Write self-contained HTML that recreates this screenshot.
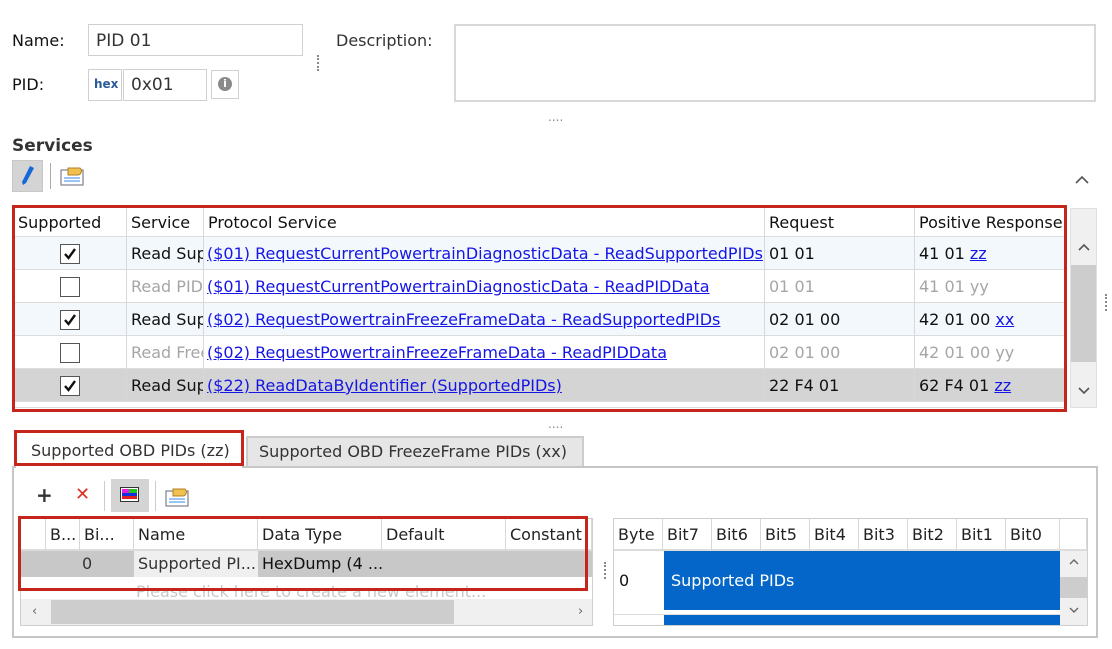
<!DOCTYPE html>
<html><head><meta charset="utf-8"><style>
*{box-sizing:border-box;margin:0;padding:0}
body{width:1112px;height:649px;background:#fff;position:relative;overflow:hidden;font-family:"DejaVu Sans","Liberation Sans",sans-serif;font-size:16px;color:#111}
.a{position:absolute}
.t{position:absolute;white-space:nowrap;line-height:20px}
.box{position:absolute;border:1px solid #d0d0d0;background:#fff}
.cell{position:absolute;white-space:nowrap;overflow:hidden;line-height:33px;padding-left:4px;border-right:1px solid #d8d8d8;border-bottom:1px solid #dcdcdc;font-size:16px}
.lk{color:#1515e6;text-decoration:underline}
.g{color:#a6a6a6}
.cb{position:absolute;left:60px;width:20px;height:20px;border:1.5px solid #555;background:#fff}
.cb svg{position:absolute;left:1px;top:1px}
.red{position:absolute;border:3px solid #c4261b}
</style></head><body>
<div class="t" style="left:12px;top:31px">Name:</div>
<div class="box" style="left:88px;top:24px;width:215px;height:32px"></div>
<div class="t" style="left:96px;top:31px;font-size:17px;color:#333">PID 01</div>
<div class="a" style="left:317px;top:55px;width:2px;height:16px;border-left:2px dotted #888"></div>
<div class="t" style="left:336px;top:31px;color:#333">Description:</div>
<div class="box" style="left:454px;top:24px;width:642px;height:78px;border:2px solid #d8d8d8"></div>
<div class="t" style="left:12px;top:75px">PID:</div>
<div class="box" style="left:88px;top:69px;width:34px;height:32px"></div>
<div class="t" style="left:94px;top:74px;font-size:12px;font-weight:bold;color:#2a5a9a">hex</div>
<div class="box" style="left:123px;top:69px;width:84px;height:32px"></div>
<div class="t" style="left:131px;top:75px;font-size:17px;color:#333">0x01</div>
<div class="box" style="left:211px;top:70px;width:28px;height:29px"></div>
<div class="a" style="left:218px;top:77px;width:14px;height:14px;border-radius:50%;background:#8a8a8a;color:#fff;font-size:11px;font-weight:bold;text-align:center;line-height:14px">i</div>
<div class="t" style="left:548px;top:107px;color:#888;font-size:12px">....</div>
<div class="t" style="left:12px;top:136px;font-weight:bold;font-size:17px;color:#333">Services</div>
<div class="a" style="left:12px;top:160px;width:31px;height:32px;background:#d4d4d4;border:1px solid #c8c8c8"></div>
<svg class="a" style="left:18px;top:164px" width="18" height="24"><path d="M12 2 L16 4 L8 19 L5 21 L4 18 Z" fill="#1668d8"/></svg>
<div class="a" style="left:50px;top:163px;width:1px;height:26px;background:#aaa"></div>
<svg class="a" style="left:60px;top:164px" width="26" height="22"><rect x="1" y="6" width="22" height="15" fill="#fff" stroke="#667"/><line x1="4" y1="14" x2="20" y2="14" stroke="#3a8ae0"/><line x1="4" y1="17" x2="20" y2="17" stroke="#3a8ae0"/><path d="M8 4 h12 a4 4 0 0 1 -2 7 h-10 z" fill="#f0c050" stroke="#b08020"/></svg>
<svg class="a" style="left:1075px;top:175px" width="14" height="10"><path d="M1 8 L7 2 L13 8" fill="none" stroke="#555" stroke-width="1.6"/></svg>

<div class="a" style="left:14px;top:208px;width:1052px;height:200px;background:#fff;overflow:hidden">
<div class="a" style="left:0;top:0;width:1052px;height:29px;border-bottom:2px solid #dedede"></div>
</div>
<div class="a" style="left:1070px;top:208px;width:27px;height:200px;background:#f0f0f0;border:1px solid #e0e0e0"></div>
<div class="a" style="left:1071px;top:265px;width:25px;height:97px;background:#cdcdcd"></div>
<svg class="a" style="left:1077px;top:242px" width="14" height="10"><path d="M2 8 L7 3 L12 8" fill="none" stroke="#555" stroke-width="1.6"/></svg>
<svg class="a" style="left:1077px;top:386px" width="14" height="10"><path d="M2 2 L7 7 L12 2" fill="none" stroke="#555" stroke-width="1.6"/></svg>
<div class="a" style="left:1105px;top:294px;width:2px;height:17px;border-left:2px dotted #888"></div>
<div class="t" style="left:548px;top:414px;color:#888;font-size:12px">....</div>

<div class="a" style="left:246px;top:436px;width:338px;height:31px;background:#e6e6e6;border:2px solid #ccc;border-bottom:none"></div>
<div class="t" style="left:259px;top:442px;color:#333">Supported OBD FreezeFrame PIDs (xx)</div>
<div class="a" style="left:12px;top:466px;width:1086px;height:172px;border:2px solid #c6c6c6;background:#fff"></div>
<div class="a" style="left:16px;top:432px;width:226px;height:36px;background:#fff"></div>
<div class="red" style="left:14px;top:430px;width:230px;height:36px"></div>
<div class="t" style="left:31px;top:441px;color:#333">Supported OBD PIDs (zz)</div>

<div class="t" style="left:36px;top:485px;font-size:20px;font-weight:bold;color:#333">+</div>
<div class="t" style="left:75px;top:485px;font-size:18px;font-weight:bold;color:#e03020">✕</div>
<div class="a" style="left:104px;top:481px;width:1px;height:30px;background:#ccc"></div>
<div class="a" style="left:111px;top:479px;width:38px;height:33px;background:#d4d4d4"></div>
<svg class="a" style="left:120px;top:487px" width="20" height="16"><rect x="0.5" y="0.5" width="18" height="14" fill="#fff" stroke="#333"/><rect x="2" y="2" width="7" height="4" fill="#e020e0"/><rect x="9" y="2" width="8" height="4" fill="#20c020"/><rect x="2" y="6" width="15" height="3" fill="#1030e0"/><rect x="2" y="9" width="15" height="3" fill="#e02020"/></svg>
<div class="a" style="left:155px;top:481px;width:1px;height:30px;background:#ccc"></div>
<svg class="a" style="left:165px;top:485px" width="26" height="22"><rect x="1" y="6" width="22" height="15" fill="#fff" stroke="#667"/><line x1="4" y1="14" x2="20" y2="14" stroke="#3a8ae0"/><line x1="4" y1="17" x2="20" y2="17" stroke="#3a8ae0"/><path d="M8 4 h12 a4 4 0 0 1 -2 7 h-10 z" fill="#f0c050" stroke="#b08020"/></svg>

<div class="a" style="left:20px;top:518px;width:573px;height:108px;border:1px solid #cfcfcf;background:#fff"></div>
<div class="t" style="left:136px;top:582px;color:#c8c8c8">Please click here to create a new element...</div>
<div class="a" style="left:21px;top:599px;width:571px;height:26px;background:#f0f0f0"></div>
<div class="a" style="left:51px;top:600px;width:403px;height:24px;background:#cdcdcd"></div>
<div class="t" style="left:32px;top:602px;color:#666;font-size:13px">‹</div>
<div class="t" style="left:578px;top:602px;color:#666;font-size:13px">›</div>
<div class="a" style="left:604px;top:562px;width:2px;height:17px;border-left:2px dotted #888"></div>

<div class="a" style="left:613px;top:518px;width:475px;height:108px;border:1px solid #cfcfcf;background:#fff"></div>
<div class="a" style="left:664px;top:551px;width:396px;height:59px;background:#0366c8"></div>
<div class="t" style="left:671px;top:571px;color:#fff">Supported PIDs</div>
<div class="t" style="left:619px;top:571px">0</div>
<div class="a" style="left:614px;top:610px;width:446px;height:5px;border-bottom:1px solid #ddd"></div>
<div class="a" style="left:664px;top:615px;width:396px;height:10px;background:#0366c8"></div>
<div class="a" style="left:1060px;top:551px;width:27px;height:74px;background:#f0f0f0"></div>
<div class="a" style="left:1060px;top:577px;width:27px;height:21px;background:#cdcdcd"></div>
<svg class="a" style="left:1068px;top:558px" width="12" height="8"><path d="M2 6 L6 2 L10 6" fill="none" stroke="#666" stroke-width="1.4"/></svg>
<svg class="a" style="left:1068px;top:606px" width="12" height="8"><path d="M2 2 L6 6 L10 2" fill="none" stroke="#666" stroke-width="1.4"/></svg>

<script>
function C(p,l,t,w,h,txt,st){var d=document.createElement('div');d.className='cell';d.style.cssText='left:'+l+'px;top:'+t+'px;width:'+w+'px;height:'+h+'px;line-height:'+h+'px;'+(st||'');d.innerHTML=txt;document.body.appendChild(d);}
function R(l,t,w,h){var d=document.createElement('div');d.className='red';d.style.cssText='left:'+l+'px;top:'+t+'px;width:'+w+'px;height:'+h+'px';document.body.appendChild(d);}
var cols=[14,127,204,765,915,1066];
var hd=['Supported','Service','Protocol Service','Request','Positive Response'];
for(var i=0;i<5;i++)C(0,cols[i],208,cols[i+1]-cols[i],30,hd[i],'border-bottom:2px solid #dcdcdc;background:#fff;');
var rows=[
['1','Read Supported','<span class="lk">($01) RequestCurrentPowertrainDiagnosticData - ReadSupportedPIDs</span>','01 01','41 01 <span class="lk">zz</span>','#f2f8fc',0],
['0','Read PIDData','<span class="lk">($01) RequestCurrentPowertrainDiagnosticData - ReadPIDData</span>','01 01','41 01 yy','#fff',1],
['1','Read Supported','<span class="lk">($02) RequestPowertrainFreezeFrameData - ReadSupportedPIDs</span>','02 01 00','42 01 00 <span class="lk">xx</span>','#f2f8fc',0],
['0','Read FreezeFrame','<span class="lk">($02) RequestPowertrainFreezeFrameData - ReadPIDData</span>','02 01 00','42 01 00 yy','#fff',1],
['1','Read Supported','<span class="lk">($22) ReadDataByIdentifier (SupportedPIDs)</span>','22 F4 01','62 F4 01 <span class="lk">zz</span>','#d4d4d4',0]];
for(var r=0;r<5;r++){var y=237+r*33,Rw=rows[r];
for(var i=0;i<5;i++){var txt=i==0?'':Rw[i];var st='background:'+Rw[5]+';';if(Rw[6]&&(i==1||i==3||i==4))st+='color:#a6a6a6;';if(i==2)st+='padding-left:3px;';C(0,cols[i],y,cols[i+1]-cols[i],33,txt,st);}
var cb=document.createElement('div');cb.className='cb';cb.style.top=(y+7)+'px';if(Rw[0]=='1')cb.innerHTML='<svg width="16" height="16"><path d="M3 8 L6.5 12 L13 3" fill="none" stroke="#111" stroke-width="2.4"/></svg>';document.body.appendChild(cb);}
C(0,14,402,1052,6,'','background:#fff;');
R(12,205,1055,207);
var lc=[21,46,80,134,258,382,506,592];var lh=['','B...','Bi...','Name','Data Type','Default','Constant'];
for(var i=0;i<7;i++)C(0,lc[i],519,lc[i+1]-lc[i],32,lh[i],'background:#fff;border-bottom:2px solid #dcdcdc;color:#222;');
C(0,21,551,571,26,'','background:#c8c8c8;border:none;');
var d=document.createElement('div');d.className='t';d.style.cssText='left:82px;top:554px;color:#333';d.textContent='0';document.body.appendChild(d);
C(0,134,551,124,26,'Supported PI...','background:#efefef;border:none;color:#333;');
C(0,258,551,140,26,'HexDump (4 ...','background:#c8c8c8;border:none;color:#111;');
R(18,516,570,75);
var rc=[614,663,712,761,810,859,908,957,1006,1060,1087];var rh=['Byte','Bit7','Bit6','Bit5','Bit4','Bit3','Bit2','Bit1','Bit0',''];
for(var i=0;i<10;i++)C(0,rc[i],519,rc[i+1]-rc[i],32,rh[i],'background:#fff;border-bottom:2px solid #dcdcdc;color:#222;');
</script>
</body></html>
